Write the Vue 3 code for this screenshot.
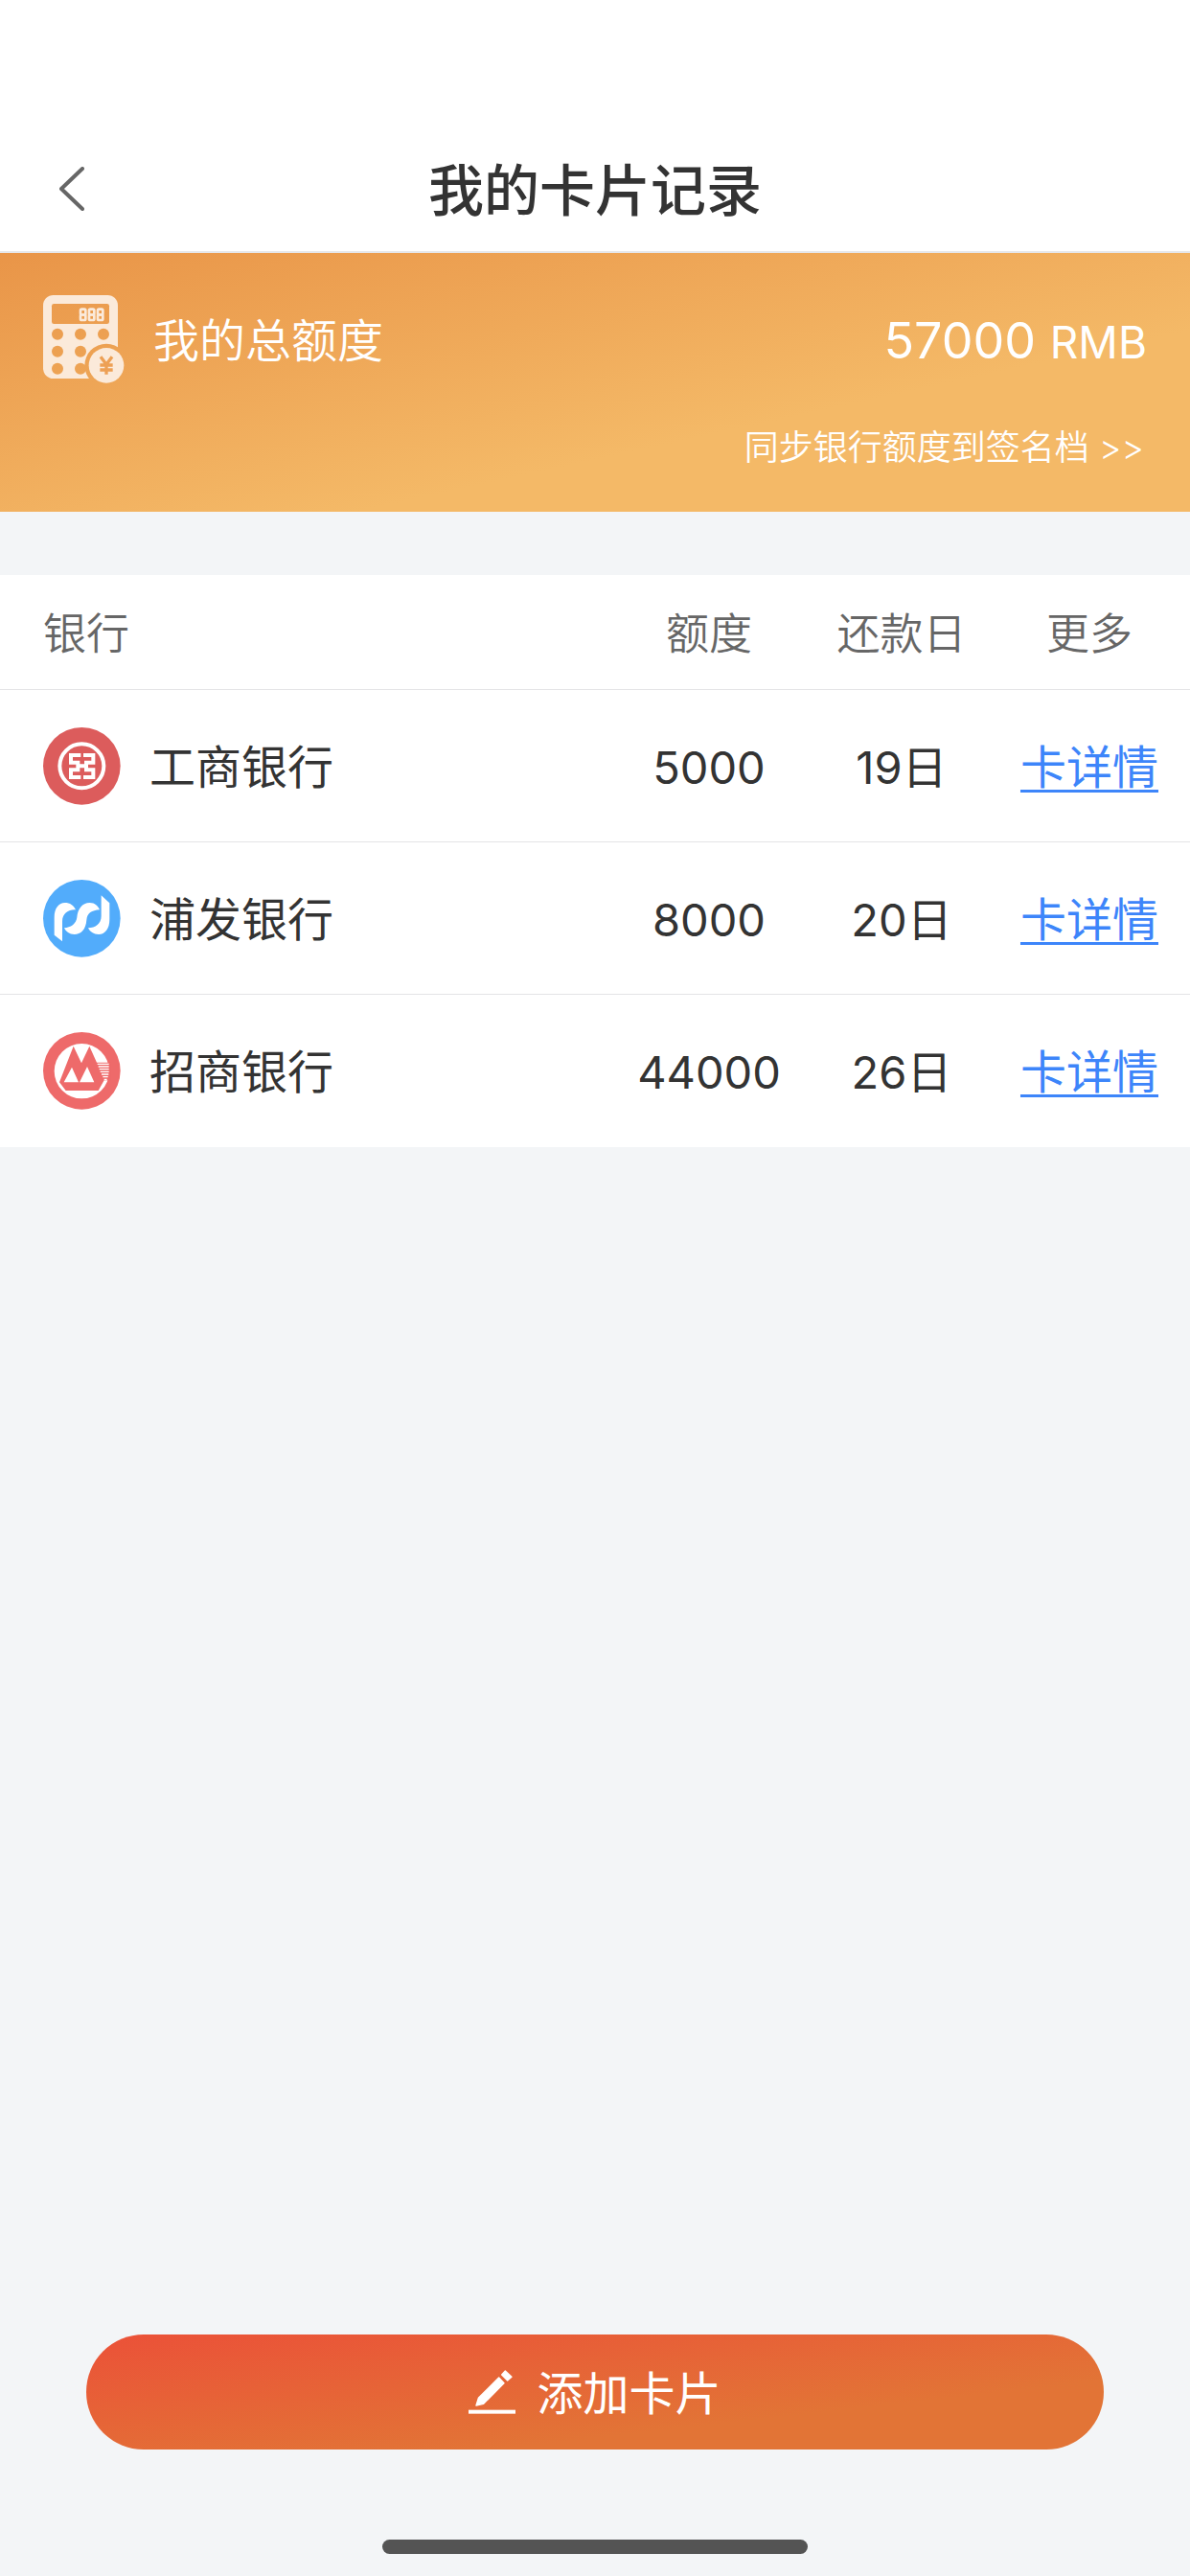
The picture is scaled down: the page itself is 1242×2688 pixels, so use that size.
<script setup>
const cards = [
  { bank: '工商银行', logo: 'icbc', limit: 5000, due: '19日' },
  { bank: '浦发银行', logo: 'spdb', limit: 8000, due: '20日' },
  { bank: '招商银行', logo: 'cmb', limit: 44000, due: '26日' }
]
const total = cards.reduce((sum, card) => sum + card.limit, 0)
</script>

<template>
  <div class="page">
    <header class="nav">
      <button class="back" type="button" aria-label="返回">
        <svg viewBox="0 0 26 46" width="26" height="46" aria-hidden="true">
          <path d="M24 2L2 23L24 44" fill="none" stroke="#666" stroke-width="4" stroke-linecap="round" stroke-linejoin="round" />
        </svg>
      </button>
      <h1 class="title">我的卡片记录</h1>
    </header>

    <main class="content">
      <section class="summary">
        <div class="summary-row">
          <svg class="calculator" viewBox="0 0 255 276" aria-hidden="true">
            <defs>
              <mask id="calculator-cut">
                <rect width="255" height="276" fill="#fff" />
                <rect x="27" y="27" width="180" height="63" rx="7" fill="#000" />
                <g fill="#000">
                  <circle cx="45" cy="122" r="18" />
                  <circle cx="117" cy="122" r="18" />
                  <circle cx="189" cy="122" r="18" />
                  <circle cx="45" cy="176" r="18" />
                  <circle cx="117" cy="176" r="18" />
                  <circle cx="45" cy="230" r="18" />
                  <circle cx="117" cy="230" r="18" />
                  <circle cx="198" cy="220" r="68" />
                </g>
              </mask>
            </defs>
            <rect width="234" height="261" rx="32" fill="#fbeada" mask="url(#calculator-cut)" />
            <g fill="none" stroke="#fbeada" stroke-width="8">
              <rect x="117" y="44" width="16" height="17" rx="4" />
              <rect x="117" y="61" width="16" height="17" rx="4" />
              <rect x="144" y="44" width="16" height="17" rx="4" />
              <rect x="144" y="61" width="16" height="17" rx="4" />
              <rect x="171" y="44" width="16" height="17" rx="4" />
              <rect x="171" y="61" width="16" height="17" rx="4" />
            </g>
            <circle cx="198" cy="220" r="55" fill="#fbeada" />
            <path d="M180 193L198 217L216 193M198 217V248M178 219H218M178 234H218" fill="none" stroke="#eda055" stroke-width="10" />
          </svg>
          <h2 class="summary-label">我的总额度</h2>
          <p class="total">{{ total }} <span class="currency">RMB</span></p>
        </div>
        <a class="sync" href="#sync">同步银行额度到签名档 &gt;&gt;</a>
      </section>

      <table class="cards">
        <colgroup>
          <col />
          <col class="col-limit" />
          <col class="col-due" />
          <col class="col-more" />
        </colgroup>
        <thead>
          <tr>
            <th class="name" scope="col">银行</th>
            <th scope="col">额度</th>
            <th scope="col">还款日</th>
            <th scope="col">更多</th>
          </tr>
        </thead>
        <tbody>
          <tr v-for="card in cards" :key="card.logo">
            <td class="name">
              <div class="bank">
                <svg v-if="card.logo === 'icbc'" class="logo" viewBox="0 0 243 243" aria-hidden="true">
                  <circle cx="121" cy="121" r="121" fill="#dc5c5c" />
                  <circle cx="121" cy="121" r="69" fill="none" stroke="#fff" stroke-width="12" />
                  <path d="M118 87H87V110H109V133H87V156H118M126 87H157V110H135V133H157V156H126M109 121H135" fill="none" stroke="#fff" stroke-width="12" />
                </svg>
                <svg v-else-if="card.logo === 'spdb'" class="logo" viewBox="0 0 243 243" aria-hidden="true">
                  <circle cx="121" cy="121" r="121" fill="#52acfb" />
                  <g fill="#fff">
                    <path d="M35 173V118C35 88 50 72 68 72C84 72 96 80 102 94C82 92 60 104 60 130V193Z" />
                    <path d="M66 151C86 150 104 138 106 118C108 92 122 72 146 72C162 72 172 82 177 94C152 96 138 104 136 126C134 156 118 171 98 171C82 171 72 163 66 151Z" />
                    <path d="M182 49L208 73V124C208 154 194 171 174 171C158 171 147 163 141 151C164 150 182 138 182 114Z" />
                  </g>
                </svg>
                <svg v-else class="logo" viewBox="0 0 243 243" aria-hidden="true">
                  <circle cx="121" cy="121" r="121" fill="#ee6a6a" />
                  <circle cx="121" cy="122" r="86" fill="#fff" />
                  <path d="M95 44L120 97L145 44L168 95H212V151H191L173 183H71L51 157Z" fill="#ee6a6a" />
                  <path d="M90 110L111 157H65ZM138 108L160 157H114Z" fill="#fff" />
                  <path d="M170 100H206M173 108H206M176 116H206M179 124H206M183 132H205M187 140H203M191 148H200" stroke="#fff" stroke-width="4" />
                </svg>
                <span class="bank-name">{{ card.bank }}</span>
              </div>
            </td>
            <td class="figure">{{ card.limit }}</td>
            <td class="figure">{{ card.due }}</td>
            <td><a class="detail" href="#detail">卡详情</a></td>
          </tr>
        </tbody>
      </table>
    </main>

    <footer class="footer">
      <button class="add" type="button">
        <svg class="pencil" viewBox="0 0 147 138" aria-hidden="true">
          <g fill="#fff" stroke="#fff" stroke-width="4" stroke-linejoin="round">
            <path d="M24 111L31 88L95 24L111 41L47 106Z" />
            <path d="M115 3L135 22L122 33L104 15Z" />
          </g>
          <rect y="125" width="147" height="12" fill="#fff" />
        </svg>
        <span class="add-label">添加卡片</span>
      </button>
      <div class="home-bar"></div>
    </footer>
  </div>
</template>

<style>
body {
  margin: 0;
  background: #f3f5f7;
}
</style>

<style scoped>
.page {
  display: flex;
  flex-direction: column;
  min-height: 100vh;
  background: #f3f5f7;
  color: #333;
  font-family: Inter, "Noto Sans CJK SC", sans-serif;
  font-size: 48px;
  line-height: 60px;
}

.nav {
  display: grid;
  grid-template-columns: 150px 1fr 150px;
  align-items: center;
  height: 130px;
  padding-top: 132px;
  border-bottom: 2px solid #e6e7ea;
  background: #fff;
}

.back {
  display: flex;
  align-items: center;
  height: 130px;
  padding: 0 0 0 62px;
  border: 0;
  background: none;
}

.title {
  margin: 0;
  padding-top: 4px;
  font-size: 58px;
  font-weight: 500;
  text-align: center;
}

.content {
  flex: 1;
}

.summary {
  display: flex;
  flex-direction: column;
  align-items: flex-end;
  gap: 37px;
  height: 226px;
  padding: 44px 45px 0;
  margin-bottom: 66px;
  background: linear-gradient(to bottom right, #e99548, #f4b967 65%);
  color: #fff;
}

.summary-row {
  display: flex;
  align-items: center;
  align-self: stretch;
}

.calculator {
  width: 85px;
  height: 92px;
  margin-right: 30px;
}

.summary-label {
  margin: 0;
  padding-top: 4px;
  font-size: 48px;
  font-weight: 350;
}

.total {
  margin: 0 0 0 auto;
  padding-top: 4px;
  font-size: 52px;
}

.currency {
  font-size: 46px;
}

.sync {
  padding-right: 3px;
  color: #fff;
  font-size: 36px;
  font-weight: 350;
  text-decoration: none;
}

.cards {
  width: 100%;
  border-collapse: separate;
  border-spacing: 0;
  table-layout: fixed;
  background: #fff;
}

.col-limit {
  width: 220px;
}

.col-due {
  width: 182px;
}

.col-more {
  width: 210px;
}

.cards th,
.cards td {
  box-sizing: border-box;
  padding: 4px 0 0;
  border-bottom: 1px solid #e4e4e6;
  text-align: center;
  white-space: nowrap;
}

.cards th {
  height: 120px;
  color: #666;
  font-size: 45px;
  font-weight: 350;
}

.cards td {
  height: 159px;
}

.cards tbody tr:last-child td {
  border-bottom-color: #fff;
}

.cards .name {
  padding-left: 45px;
  text-align: left;
}

.cards td.name {
  padding-top: 0;
}

.cards .figure {
  font-size: 47px;
}

.bank {
  display: flex;
  align-items: center;
  gap: 30px;
}

.bank-name,
.add-label {
  padding-top: 4px;
}

.logo {
  width: 81px;
  height: 81px;
}

.detail {
  color: #3d85fa;
  text-decoration: underline;
  text-decoration-thickness: 3px;
  text-underline-offset: 6px;
}

.footer {
  display: flex;
  flex-direction: column;
  align-items: center;
  gap: 94px;
  padding: 0 90px 23px;
}

.add {
  display: flex;
  align-items: center;
  justify-content: center;
  gap: 22px;
  width: 100%;
  height: 120px;
  padding: 0;
  border: 0;
  border-radius: 60px;
  background: linear-gradient(to bottom right, #eb5138, #e27436 70%);
  color: #fff;
  font: inherit;
}

.pencil {
  width: 49px;
  height: 46px;
}

.home-bar {
  width: 444px;
  height: 15px;
  border-radius: 8px;
  background: #545454;
}
</style>
